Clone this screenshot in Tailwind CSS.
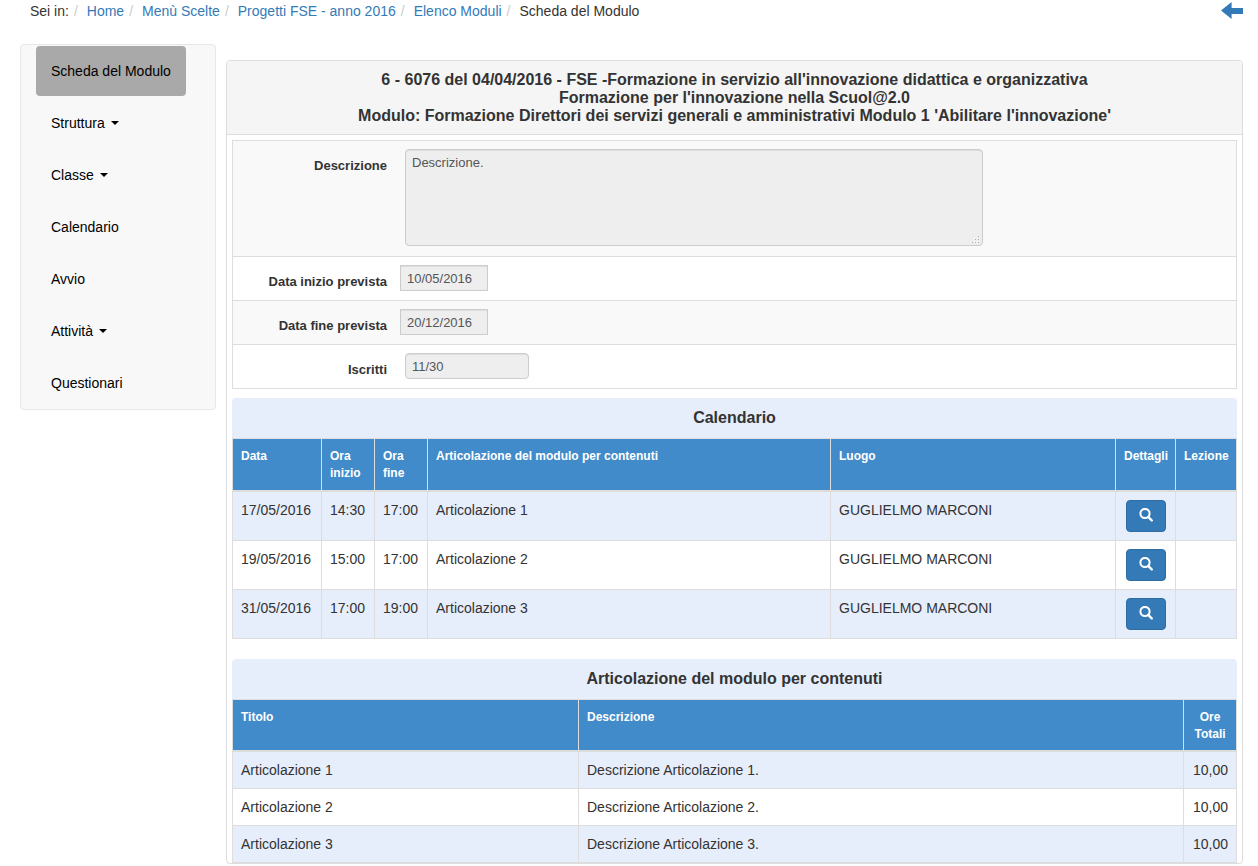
<!DOCTYPE html>
<html lang="it">
<head>
<meta charset="utf-8">
<title>Scheda del Modulo</title>
<script src="https://cdn.jsdelivr.net/npm/@tailwindcss/browser@4"></script>
</head>
<body class="bg-white font-['Liberation_Sans',Arial,sans-serif] text-sm leading-5 text-[#333]">
<svg class="hidden" aria-hidden="true">
  <symbol id="search" viewBox="0 0 14 14">
    <circle cx="6" cy="5.5" r="4.6" fill="none" stroke="currentColor" stroke-width="2"/>
    <path d="M9.2 8.9l3.6 3.6" fill="none" stroke="currentColor" stroke-width="2.4" stroke-linecap="round"/>
  </symbol>
</svg>

<header class="flex items-start justify-between pt-px pr-[15px] pl-[30px]">
  <nav aria-label="Percorso">
    <ol class="flex flex-wrap">
      <li>Sei in:</li>
      <li><span class="pr-[9px] pl-[5px] text-[#ccc]">/</span><a href="#" class="text-[#337ab7]">Home</a></li>
      <li><span class="pr-[9px] pl-[5px] text-[#ccc]">/</span><a href="#" class="text-[#337ab7]">Menù Scelte</a></li>
      <li><span class="pr-[9px] pl-[5px] text-[#ccc]">/</span><a href="#" class="text-[#337ab7]">Progetti FSE - anno 2016</a></li>
      <li><span class="pr-[9px] pl-[5px] text-[#ccc]">/</span><a href="#" class="text-[#337ab7]">Elenco Moduli</a></li>
      <li><span class="pr-[9px] pl-[5px] text-[#ccc]">/</span><span aria-current="page">Scheda del Modulo</span></li>
    </ol>
  </nav>
  <a href="#" aria-label="Indietro" class="pt-px text-[#337ab7]">
    <svg class="block h-[17px] w-[22px]" viewBox="0 0 22 17" fill="currentColor"><path d="M0 8.5L10.6 0V6H22V12H10.6V17Z"/></svg>
  </a>
</header>

<div class="flex items-start gap-2.5 pt-[23px] pr-[15px] pl-5">
  <nav aria-label="Menu del modulo" class="w-[196px] shrink-0 rounded border border-[#e7e7e7] bg-[#f8f8f8] px-[15px] py-px text-black">
    <ul class="flex flex-col items-start gap-0.5">
      <li><a href="#" class="block rounded bg-[#a9a9a9] p-[15px]">Scheda del Modulo</a></li>
      <li><button type="button" class="flex items-center gap-1.5 p-[15px]">Struttura <svg class="h-1 w-2" viewBox="0 0 8 4"><path d="M0 0h8L4 4z"/></svg></button></li>
      <li><button type="button" class="flex items-center gap-1.5 p-[15px]">Classe <svg class="h-1 w-2" viewBox="0 0 8 4"><path d="M0 0h8L4 4z"/></svg></button></li>
      <li><a href="#" class="block p-[15px]">Calendario</a></li>
      <li><a href="#" class="block p-[15px]">Avvio</a></li>
      <li><button type="button" class="flex items-center gap-1.5 p-[15px]">Attività <svg class="h-1 w-2" viewBox="0 0 8 4"><path d="M0 0h8L4 4z"/></svg></button></li>
      <li><a href="#" class="block p-[15px]">Questionari</a></li>
    </ul>
  </nav>

  <main class="mt-4 min-w-0 grow rounded border border-[#ddd] shadow-[0_1px_1px_rgba(0,0,0,0.05)]">
    <h1 class="rounded-t-[3px] border-b border-[#ddd] bg-[#f5f5f5] px-4 pt-2.5 pb-[9px] text-center text-base leading-[18px] font-bold">
      6 - 6076 del 04/04/2016 - FSE -Formazione in servizio all'innovazione didattica e organizzativa<br>
      Formazione per l'innovazione nella Scuol@2.0<br>
      Modulo: Formazione Direttori dei servizi generali e amministrativi Modulo 1 'Abilitare l'innovazione'
    </h1>

    <div class="px-[5px] pt-[5px]">
      <form class="divide-y divide-[#ddd] border border-[#ddd] text-[13px] leading-[18px]">
        <div class="flex items-start bg-[#f9f9f9] pt-2 pr-2 pb-2.5">
          <label for="descrizione" class="w-[154px] shrink-0 pt-2 text-right font-bold">Descrizione</label>
          <div class="relative ml-[18px] w-full max-w-[578px]">
            <textarea id="descrizione" readonly class="block h-[97px] w-full resize-none rounded border border-[#ccc] bg-[#eee] px-1.5 py-1 text-[#555] shadow-[inset_0_1px_1px_rgba(0,0,0,0.075)]">Descrizione.</textarea>
            <svg class="absolute right-1 bottom-[3px] size-[7px]" viewBox="0 0 7 7" shape-rendering="crispEdges">
              <path fill="#fff" d="M5 -1h1v1h-1zM2 2h1v1h-1zM5 2h1v1h-1zM2 5h1v1h-1zM5 5h1v1h-1z"/>
              <path fill="#aaa" d="M6 0h1v1h-1zM3 3h1v1h-1zM6 3h1v1h-1zM0 6h1v1h-1zM3 6h1v1h-1zM6 6h1v1h-1z"/>
            </svg>
          </div>
        </div>
        <div class="flex items-start bg-white pt-2 pb-[9px]">
          <label for="inizio" class="w-[154px] shrink-0 pt-2 text-right font-bold">Data inizio prevista</label>
          <input id="inizio" type="text" readonly value="10/05/2016" class="ml-[13px] h-[26px] w-[88px] border border-[#ccc] bg-[#eee] px-1.5 text-[#555] shadow-[inset_0_1px_1px_rgba(0,0,0,0.075)]">
        </div>
        <div class="flex items-start bg-[#f9f9f9] pt-2 pb-[9px]">
          <label for="fine" class="w-[154px] shrink-0 pt-2 text-right font-bold">Data fine prevista</label>
          <input id="fine" type="text" readonly value="20/12/2016" class="ml-[13px] h-[26px] w-[88px] border border-[#ccc] bg-[#eee] px-1.5 text-[#555] shadow-[inset_0_1px_1px_rgba(0,0,0,0.075)]">
        </div>
        <div class="flex items-start bg-white pt-2 pb-[9px]">
          <label for="iscritti" class="w-[154px] shrink-0 pt-2 text-right font-bold">Iscritti</label>
          <input id="iscritti" type="text" readonly value="11/30" class="ml-[18px] h-[26px] w-[124px] rounded border border-[#ccc] bg-[#eee] px-1.5 text-[#555] shadow-[inset_0_1px_1px_rgba(0,0,0,0.075)]">
        </div>
      </form>

      <section class="mt-[9px]">
        <h2 class="rounded-t bg-[#e6edfb] py-2.5 text-center text-base leading-5 font-bold">Calendario</h2>
        <table class="w-full table-fixed border-separate border-spacing-0 border-t border-l border-[#ddd] **:[td]:border-r **:[td]:border-b **:[td]:border-[#ddd] **:[td]:p-2 **:[td]:align-top">
          <colgroup><col class="w-[89px]"><col class="w-[53px]"><col class="w-[53px]"><col class="w-[403px]"><col><col class="w-[60px]"><col class="w-[61px]"></colgroup>
          <thead class="bg-[#428bca] text-left text-xs leading-[17px] text-white **:[th]:border-r **:[th]:border-b-2 **:[th]:border-[#ddd] **:[th]:px-2 **:[th]:pt-[9px] **:[th]:pb-[7px] **:[th]:align-top">
            <tr class="h-[53px]"><th>Data</th><th>Ora inizio</th><th>Ora fine</th><th>Articolazione del modulo per contenuti</th><th>Luogo</th><th>Dettagli</th><th>Lezione</th></tr>
          </thead>
          <tbody>
            <tr class="bg-[#e6edfb]"><td>17/05/2016</td><td>14:30</td><td>17:00</td><td>Articolazione 1</td><td>GUGLIELMO MARCONI</td>
              <td><button type="button" aria-label="Dettagli 17/05/2016" class="mx-auto flex h-8 w-10 items-start justify-center rounded border border-[#2e6da4] bg-[#337ab7] pt-[7px] text-white"><svg class="size-3.5"><use href="#search"/></svg></button></td><td></td></tr>
            <tr><td>19/05/2016</td><td>15:00</td><td>17:00</td><td>Articolazione 2</td><td>GUGLIELMO MARCONI</td>
              <td><button type="button" aria-label="Dettagli 19/05/2016" class="mx-auto flex h-8 w-10 items-start justify-center rounded border border-[#2e6da4] bg-[#337ab7] pt-[7px] text-white"><svg class="size-3.5"><use href="#search"/></svg></button></td><td></td></tr>
            <tr class="bg-[#e6edfb]"><td>31/05/2016</td><td>17:00</td><td>19:00</td><td>Articolazione 3</td><td>GUGLIELMO MARCONI</td>
              <td><button type="button" aria-label="Dettagli 31/05/2016" class="mx-auto flex h-8 w-10 items-start justify-center rounded border border-[#2e6da4] bg-[#337ab7] pt-[7px] text-white"><svg class="size-3.5"><use href="#search"/></svg></button></td><td></td></tr>
          </tbody>
        </table>
      </section>

      <section class="mt-5">
        <h2 class="rounded-t bg-[#e6edfb] py-2.5 text-center text-base leading-5 font-bold">Articolazione del modulo per contenuti</h2>
        <table class="w-full table-fixed border-separate border-spacing-0 border-t border-l border-[#ddd] **:[td]:border-r **:[td]:border-b **:[td]:border-[#ddd] **:[td]:p-2 **:[td]:align-top">
          <colgroup><col class="w-[346px]"><col><col class="w-[53px]"></colgroup>
          <thead class="bg-[#428bca] text-left text-xs leading-[17px] text-white **:[th]:border-r **:[th]:border-b-2 **:[th]:border-[#ddd] **:[th]:px-2 **:[th]:pt-[9px] **:[th]:pb-[7px] **:[th]:align-top">
            <tr><th>Titolo</th><th>Descrizione</th><th class="text-center">Ore Totali</th></tr>
          </thead>
          <tbody>
            <tr class="bg-[#e6edfb]"><td>Articolazione 1</td><td>Descrizione Articolazione 1.</td><td class="text-right">10,00</td></tr>
            <tr><td>Articolazione 2</td><td>Descrizione Articolazione 2.</td><td class="text-right">10,00</td></tr>
            <tr class="bg-[#e6edfb]"><td>Articolazione 3</td><td>Descrizione Articolazione 3.</td><td class="text-right">10,00</td></tr>
          </tbody>
        </table>
      </section>
    </div>
  </main>
</div>
</body>
</html>
